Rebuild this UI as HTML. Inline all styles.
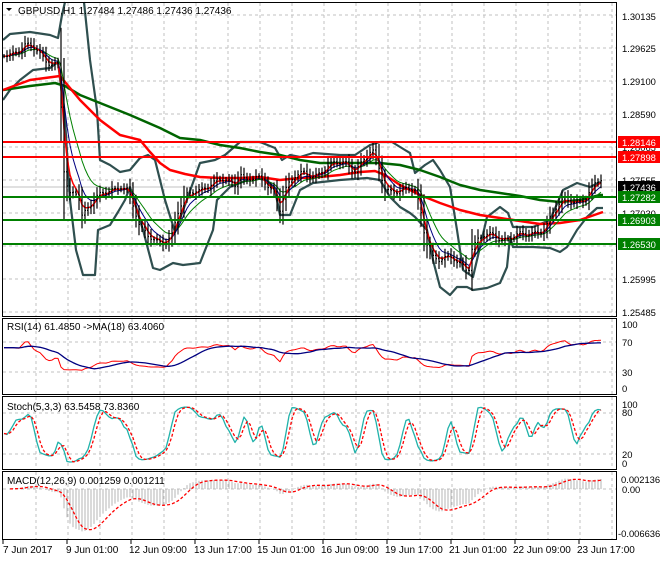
<!DOCTYPE html>
<html><head><meta charset="utf-8"><style>
html,body{margin:0;padding:0;background:#fff;}
body{width:660px;height:560px;overflow:hidden;font-family:"Liberation Sans",sans-serif;}
svg text{font-family:"Liberation Sans",sans-serif;font-size:10px;}
svg .ax text{font-size:9.4px;}
</style></head><body>
<svg id="s" width="660" height="560" xmlns="http://www.w3.org/2000/svg">
<rect width="660" height="560" fill="#fff"/>
<g id="grid"></g>
<g id="main"></g>
<g id="sub"></g>
<line x1="2" y1="142" x2="617" y2="142" stroke="#f00" stroke-width="2"/>
<line x1="2" y1="157" x2="617" y2="157" stroke="#f00" stroke-width="2"/>
<line x1="2" y1="197" x2="617" y2="197" stroke="#008000" stroke-width="2"/>
<line x1="2" y1="220" x2="617" y2="220" stroke="#008000" stroke-width="2"/>
<line x1="2" y1="244" x2="617" y2="244" stroke="#008000" stroke-width="2"/>
<rect x="2.5" y="2.5" width="614" height="314" fill="none" stroke="#000"/>
<rect x="2.5" y="318.5" width="614" height="76" fill="none" stroke="#000"/>
<rect x="2.5" y="396.5" width="614" height="73" fill="none" stroke="#000"/>
<rect x="2.5" y="471.5" width="614" height="68" fill="none" stroke="#000"/>
<polygon points="6,8 12,8 9,11" fill="#000"/>
<text x="18" y="14" fill="#000">GBPUSD,H1  1.27484 1.27486 1.27436 1.27436</text>
<text x="7" y="330" fill="#000">RSI(14) 61.4850  -&gt;MA(18) 63.4060</text>
<text x="7" y="410" fill="#000">Stoch(5,3,3) 63.5458 73.8360</text>
<text x="7" y="484" fill="#000">MACD(12,26,9) 0.001259 0.001211</text>
<g class="ax">
<g fill="#000">
<text x="622" y="20">1.30135</text>
<text x="622" y="52">1.29625</text>
<text x="622" y="85">1.29100</text>
<text x="622" y="118">1.28590</text>
<text x="622" y="151">1.28065</text>
<text x="622" y="184">1.27555</text>
<text x="622" y="217">1.27030</text>
<text x="622" y="283">1.25995</text>
<text x="622" y="316">1.25485</text>
<text x="622" y="328">100</text>
<text x="622" y="346">70</text>
<text x="622" y="376">30</text>
<text x="622" y="392">0</text>
<text x="622" y="408">100</text>
<text x="622" y="416">80</text>
<text x="622" y="458">20</text>
<text x="622" y="467">0</text>
<text x="621" y="483">0.002136</text>
<text x="622" y="493">0.00</text>
<text x="618" y="537">-0.006636</text>
</g>
<rect x="618" y="136" width="42" height="12" fill="#f00"/><text x="622" y="146" fill="#fff">1.28146</text>
<rect x="618" y="151" width="42" height="12" fill="#f00"/><text x="622" y="161" fill="#fff">1.27898</text>
<rect x="618" y="181" width="42" height="12" fill="#000"/><text x="622" y="191" fill="#fff">1.27436</text>
<rect x="618" y="191" width="42" height="12" fill="#008000"/><text x="622" y="201" fill="#fff">1.27282</text>
<rect x="618" y="214" width="42" height="12" fill="#008000"/><text x="622" y="224" fill="#fff">1.26903</text>
<rect x="618" y="238" width="42" height="12" fill="#008000"/><text x="622" y="248" fill="#fff">1.26530</text>
</g>
<g fill="#000">
<text x="3" y="553">7 Jun 2017</text>
<text x="66" y="553">9 Jun 01:00</text>
<text x="129" y="553">12 Jun 09:00</text>
<text x="194" y="553">13 Jun 17:00</text>
<text x="257" y="553">15 Jun 01:00</text>
<text x="321" y="553">16 Jun 09:00</text>
<text x="385" y="553">19 Jun 17:00</text>
<text x="449" y="553">21 Jun 01:00</text>
<text x="513" y="553">22 Jun 09:00</text>
<text x="577" y="553">23 Jun 17:00</text>
</g>
</svg>
<script>
(function(){
var NS="http://www.w3.org/2000/svg";
function el(p,t,a){var e=document.createElementNS(NS,t);for(var k in a)e.setAttribute(k,a[k]);p.appendChild(e);return e;}
function pl(p,pts,c,w,d){var s=pts.map(function(q){return q[0].toFixed(1)+","+q[1].toFixed(1)}).join(" ");var a={points:s,fill:"none",stroke:c,"stroke-width":w,"stroke-linejoin":"round"};if(d)a["stroke-dasharray"]=d;return el(p,"polyline",a);}
function arr(a){var r=[];for(var i=0;i<a.length;i+=2)r.push([a[i],a[i+1]]);return r;}
function interp(P,x){if(x<=P[0][0])return P[0][1];for(var i=1;i<P.length;i++){if(x<=P[i][0]){var t=(x-P[i-1][0])/(P[i][0]-P[i-1][0]);return P[i-1][1]+t*(P[i][1]-P[i-1][1]);}}return P[P.length-1][1];}
var g=document.getElementById("grid"),m=document.getElementById("main"),sb=document.getElementById("sub");
var D="3,3",GC="#c0c0c0";
for(var x=36;x<=612;x+=32){
 el(g,"line",{x1:x,y1:3,x2:x,y2:316,stroke:GC,"stroke-dasharray":D});
 el(g,"line",{x1:x,y1:319,x2:x,y2:394,stroke:GC,"stroke-dasharray":D});
 el(g,"line",{x1:x,y1:397,x2:x,y2:469,stroke:GC,"stroke-dasharray":D});
 el(g,"line",{x1:x,y1:472,x2:x,y2:539,stroke:GC,"stroke-dasharray":D});
}
[15,48,81,114,147,180,213,246,279,312].forEach(function(y){el(g,"line",{x1:3,y1:y,x2:616,y2:y,stroke:GC,"stroke-dasharray":D});});
[342,372,413,454,489].forEach(function(y){el(g,"line",{x1:3,y1:y,x2:616,y2:y,stroke:GC,"stroke-dasharray":D});});
el(g,"line",{x1:3,y1:187,x2:616,y2:187,stroke:"#c0c0c0"});
for(var x=3;x<=612;x+=64){el(g,"line",{x1:x,y1:540,x2:x,y2:544,stroke:"#000"});}

var price=arr([3,55,15,48,25,45,35,50,45,58,55,62,60,65,62,150,65,185,70,200,78,195,82,215,88,205,95,195,105,195,115,190,122,182,128,185,135,210,140,230,148,240,155,242,165,240,172,235,178,215,185,200,195,188,205,183,215,183,225,182,235,183,240,170,245,180,255,182,265,185,275,190,280,205,285,188,295,178,305,172,315,172,325,170,335,168,345,163,355,168,365,160,372,152,378,165,385,185,395,188,405,192,415,193,420,208,425,235,432,255,438,262,445,262,455,260,465,262,468,270,472,245,478,240,485,237,495,235,505,237,515,238,525,240,535,232,545,225,555,210,565,200,575,198,585,197,595,188,603,182]);
var N=200,xs=[],cl=[];
for(var i=0;i<N;i++){var x=4+i*3;xs.push(x);var n=4*Math.sin(i*0.5)+2*Math.sin(i*1.3+1)+1.5*Math.sin(i*0.21);cl.push(interp(price,x)+n);}
var up1=arr([3,40,10,34,30,32,50,35,58,38,62,15,65,2]);
var up2=arr([84,2,90,60,97,110,100,160,110,165,120,172,130,170,140,158,148,155,155,160,165,200,175,232,185,205,200,163,215,160,225,155,240,142,260,142,275,148,282,160,290,155,300,157,313,153,340,155,355,155,370,145,380,142,392,142,405,150,410,153,415,173,425,165,433,160,440,170,450,187,457,230,463,270,473,277,487,217,500,207,508,213,513,227,533,227,550,220,563,190,577,183,590,187,600,182]);
var lo=arr([3,100,10,90,20,80,33,70,50,68,58,62,65,120,70,200,76,250,83,275,95,275,98,230,110,225,118,212,125,200,130,187,143,230,153,268,160,270,173,263,183,265,200,263,213,230,217,200,230,187,240,183,253,178,267,180,275,190,280,215,290,215,300,190,313,183,340,180,367,178,380,180,390,197,400,207,410,213,415,217,427,230,433,260,440,287,450,295,457,287,467,287,473,290,487,288,500,283,507,267,510,237,513,247,533,247,550,248,560,252,567,247,577,230,587,217,597,208,603,208]);
pl(m,up1,"#2f4f4f",2.2);pl(m,up2,"#2f4f4f",2.2);pl(m,lo,"#2f4f4f",2.2);
var sr=arr([3,90,30,80,60,76,65,82,80,100,100,120,120,135,140,140,150,152,160,163,170,170,185,174,200,177,220,178,240,178,260,177,280,180,300,178,320,177,340,175,360,172,375,171,385,175,400,185,420,195,440,203,460,210,480,215,500,218,520,221,540,224,560,223,580,220,600,213,603,212]);
var sg=arr([3,90,30,86,55,83,65,86,80,95,100,103,130,115,160,128,180,138,200,140,220,145,240,148,260,152,280,155,300,160,320,163,350,163,380,163,400,165,420,170,440,177,460,185,480,190,500,193,520,196,540,200,560,202,580,200,600,195,603,195]);
pl(m,sg,"#006400",2.5);pl(m,sr,"#f00",2.5);
function ema(a,p){var k=2/(p+1),r=[a[0]];for(var i=1;i<a.length;i++)r.push(r[i-1]+k*(a[i]-r[i-1]));return r;}
function sma(a,p){var r=[];for(var i=0;i<a.length;i++){var s=0,c=0;for(var j=Math.max(0,i-p+1);j<=i;j++){s+=a[j];c++;}r.push(s/c);}return r;}
var f1=ema(cl,3),f2=ema(cl,6),f3=ema(cl,11);
function ser(a){return a.map(function(v,i){return [xs[i],v];});}
pl(m,ser(f3),"#008000",1);pl(m,ser(f2),"#000080",1);pl(m,ser(f1),"#f00",1.5);
var d="";
for(var i=0;i<N;i++){var vol=3+Math.abs(Math.sin(i*1.7))*5+(Math.abs(cl[i]-(i?cl[i-1]:cl[i])))*1.0;var o=i?cl[i-1]:cl[i];var hi=Math.min(o,cl[i])-vol*0.7,lw=Math.max(o,cl[i])+vol*0.7;d+="M"+xs[i]+" "+hi.toFixed(1)+"V"+lw.toFixed(1)+"M"+(xs[i]-1)+" "+o.toFixed(1)+"h1M"+xs[i]+" "+cl[i].toFixed(1)+"h1";}
el(m,"path",{d:d,stroke:"#000","stroke-width":1.2,fill:"none"});
var ch=[0];for(var i=1;i<N;i++)ch.push(cl[i-1]-cl[i]);
var ag=0.5,al=0.5,rsi=[];for(var i=0;i<N;i++){var u=Math.max(ch[i],0),l=Math.max(-ch[i],0);ag=(ag*13+u)/14;al=(al*13+l)/14;var r=al+ag>0?100*ag/(ag+al):50;r=50+(r-50)*0.6+5;rsi.push(Math.max(8,Math.min(95,r)));}
rsi[0]=rsi[1]=rsi[2]=rsi[3];
var rma=sma(rsi,12);
pl(sb,rsi.map(function(v,i){return[xs[i],388-v*0.64];}),"#f00",1);
pl(sb,rma.map(function(v,i){return[xs[i],388-v*0.64];}),"#000080",1.3);
var K=[];for(var i=0;i<N;i++){var mn=1e9,mx=-1e9;for(var j=Math.max(0,i-4);j<=i;j++){mn=Math.min(mn,cl[j]-2);mx=Math.max(mx,cl[j]+2);}K.push(100*(mx-cl[i])/(mx-mn));}
var Ks=sma(K,3),Ds=sma(Ks,3);
pl(sb,Ks.map(function(v,i){return[xs[i],463-v*0.59];}),"#20b2aa",1.3);
pl(sb,Ds.map(function(v,i){return[xs[i],463-v*0.59];}),"#f00",1.3,"3,2");
var pr=cl.map(function(y){return 1.30135-(y-16)*0.0001545;});
var e12=ema(pr,8),e26=ema(pr,18),mc=e12.map(function(v,i){return v-e26[i];});var sig=sma(mc,6);
var hd="";for(var i=2;i<N;i+=1){var y=489-mc[i]*6500;y=Math.max(473,Math.min(538,y));hd+="M"+xs[i]+" 489V"+y.toFixed(1);}
el(sb,"path",{d:hd,stroke:"#b4b4b4","stroke-width":1});
pl(sb,sig.slice(2).map(function(v,i){return[xs[i+2],Math.max(473,Math.min(538,489-v*6500))];}),"#f00",1.3,"3,2");
})();
</script>
</body></html>
